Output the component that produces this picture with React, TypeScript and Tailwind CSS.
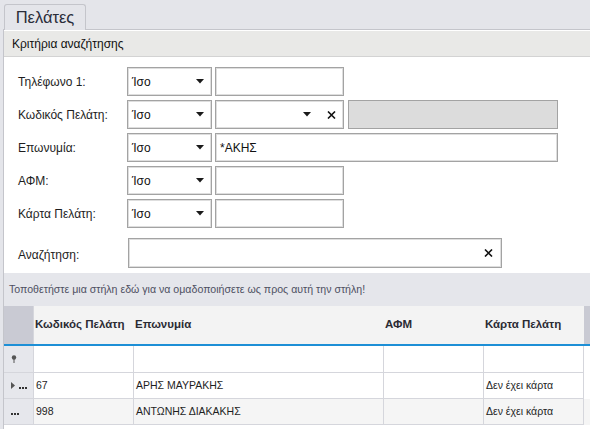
import React from "react";

const Arrow = () => (
  <svg width="8" height="5" viewBox="0 0 8 5" className="shrink-0">
    <path d="M0 0 H8 L4 4.5 Z" fill="#1a1a1a" />
  </svg>
);

const Clear = () => (
  <svg width="9" height="8" viewBox="0 0 9 8" className="shrink-0">
    <path d="M1 0.5 L8 7.5 M8 0.5 L1 7.5" stroke="#111" strokeWidth="1.6" />
  </svg>
);

const box =
  "h-[29px] border border-[#a3a3a3] shadow-[inset_0_0_0_1px_#dedede] bg-white flex items-center";

const Combo = () => (
  <div className={`${box} w-[85px] pl-[4px] pr-[7px] justify-between`}>
    <span className="text-[12px] text-[#111]">Ίσο</span>
    <Arrow />
  </div>
);

const Row = ({ label, children }: { label: string; children?: React.ReactNode }) => (
  <div className="flex items-center h-[29px]">
    <div className="w-[109px] text-[12px] text-[#1e1e1e]">{label}</div>
    <Combo />
    <div className="flex items-center gap-[4px] ml-[3px]">{children}</div>
  </div>
);

const columns = [
  { title: "Κωδικός Πελάτη", w: "w-[100px]" },
  { title: "Επωνυμία", w: "w-[250px]" },
  { title: "ΑΦΜ", w: "w-[100px]" },
  { title: "Κάρτα Πελάτη", w: "w-[100px]" },
];

const rows = [
  ["67", "ΑΡΗΣ ΜΑΥΡΑΚΗΣ", "", "Δεν έχει κάρτα"],
  ["998", "ΑΝΤΩΝΗΣ ΔΙΑΚΑΚΗΣ", "", "Δεν έχει κάρτα"],
];

const Dots = () => (
  <div className="flex gap-[1px]">
    <div className="w-[2px] h-[2px] bg-[#333]" />
    <div className="w-[2px] h-[2px] bg-[#333]" />
    <div className="w-[2px] h-[2px] bg-[#333]" />
  </div>
);

export default function App() {
  return (
    <div
      className="w-[590px] h-[429px] bg-[#e4e5ea] overflow-hidden flex flex-col"
      style={{ fontFamily: '"Liberation Sans", Arial, sans-serif' }}
    >
      {/* Tab strip */}
      <div className="flex pl-[4px] pt-[3px]">
        <div className="w-[82px] h-[26px] border border-b-0 border-[#c4c5cb] rounded-t-[3px] flex items-center justify-center text-[16.5px] text-[#2a2d3a] relative top-[1px] bg-[#e4e5ea]">
          Πελάτες
        </div>
      </div>

      {/* Panel */}
      <div className="flex-1 ml-[3px] border-l border-t border-[#c4c5cb] bg-white flex flex-col">
        <div className="h-[26px] mt-[1px] bg-[#e9e9e7] border-b border-[#d3d3d3] flex items-center pl-[8px] text-[12px] text-[#111]">
          Κριτήρια αναζήτησης
        </div>

        {/* Form */}
        <div className="pl-[14px] pt-[10px] pb-[5px] flex flex-col gap-[4px]">
          <Row label="Τηλέφωνο 1:">
            <div className={`${box} w-[129px]`} />
          </Row>
          <Row label="Κωδικός Πελάτη:">
            <div className={`${box} w-[129px] justify-end pr-[7px] gap-[16px]`}>
              <Arrow />
              <Clear />
            </div>
            <div className="h-[29px] w-[210px] border border-[#a3a3a3] bg-[#dcdcdc]" />
          </Row>
          <Row label="Επωνυμία:">
            <div className={`${box} w-[343px] pl-[4px] text-[12px] text-[#111]`}>*ΑΚΗΣ</div>
          </Row>
          <Row label="ΑΦΜ:">
            <div className={`${box} w-[129px]`} />
          </Row>
          <Row label="Κάρτα Πελάτη:">
            <div className={`${box} w-[129px]`} />
          </Row>
          <div className="flex items-center mt-[6px] h-[30px]">
            <div className="w-[110px] text-[12px] text-[#1e1e1e] pt-[3px]">Αναζήτηση:</div>
            <div className={`${box} h-[30px] w-[374px] justify-end pr-[8px]`}>
              <Clear />
            </div>
          </div>
        </div>

        {/* Group panel */}
        <div className="h-[33px] bg-[#e5e6eb] flex items-center pl-[5px] text-[10.6px] text-[#4e5062]">
          Τοποθετήστε μια στήλη εδώ για να ομαδοποιήσετε ως προς αυτή την στήλη!
        </div>

        {/* Grid */}
        <div className="flex-1 flex flex-col text-[10.5px]">
          <div className="flex h-[40px] border-b-2 border-[#1d8fd6]">
            <div className="w-[30px] bg-[#c9cad3] border-r border-[#d5d6dc]" />
            {columns.map((c) => (
              <div
                key={c.title}
                className={`${c.w} bg-[#f3f3f3] flex items-center pl-[1px] font-bold text-[#2b2b33] text-[11.5px]`}
              >
                {c.title}
              </div>
            ))}
            <div className="flex-1 bg-[#c9cad3]" />
          </div>

          {/* Filter row */}
          <div className="flex h-[27px]">
            <div className="w-[30px] bg-[#e6e7ec] border-r border-b border-[#d5d6dc] flex items-center pl-[7px]">
              <svg width="6" height="8" viewBox="0 0 6 8">
                <circle cx="3" cy="2.5" r="2.2" fill="#555" />
                <path d="M3 4 V8" stroke="#555" strokeWidth="1" />
              </svg>
            </div>
            {columns.map((c) => (
              <div key={c.title} className={`${c.w} border-r border-b border-[#d5d6dc]`} />
            ))}
          </div>

          {rows.map((r, i) => (
            <div key={i} className={`flex h-[26px] ${i === 1 ? "bg-[#f5f5f5]" : "bg-white"}`}>
              <div className="w-[30px] bg-[#e6e7ec] border-r border-b border-[#d5d6dc] flex items-center pl-[7px] gap-[4px]">
                {i === 0 && (
                  <svg width="4" height="7" viewBox="0 0 4 7">
                    <path d="M0 0 L4 3.5 L0 7 Z" fill="#555" />
                  </svg>
                )}
                <div className="pt-[5px]">
                  <Dots />
                </div>
              </div>
              {columns.map((c, j) => (
                <div
                  key={c.title}
                  className={`${c.w} border-r border-b border-[#d5d6dc] flex items-center pl-[2px] text-[#1e1e1e]`}
                >
                  {r[j]}
                </div>
              ))}
            </div>
          ))}
        </div>
      </div>
    </div>
  );
}
